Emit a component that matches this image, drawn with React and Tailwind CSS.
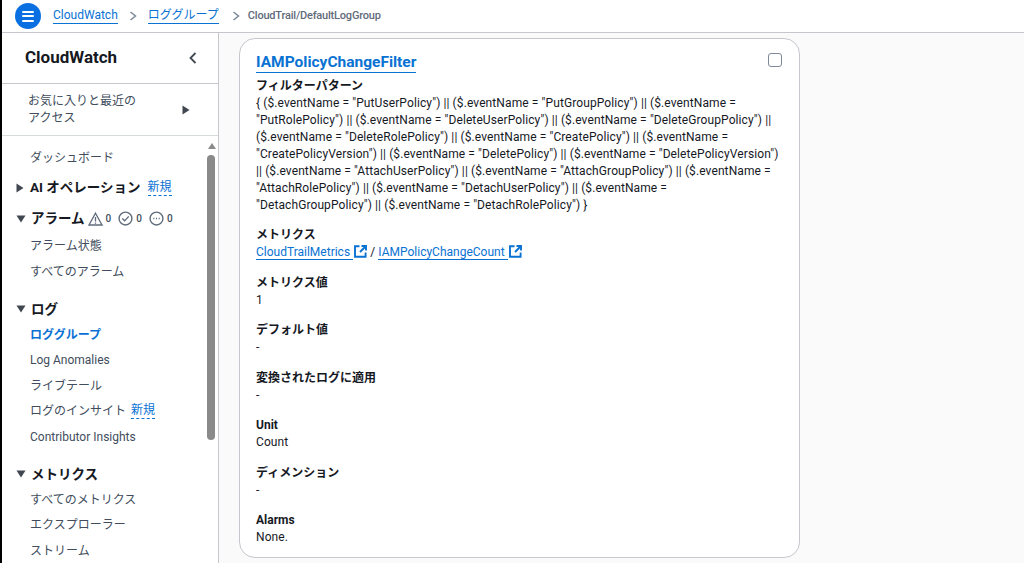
import React from "react";

function Caret({ open, className = "" }) {
  return open ? (
    <svg width="10" height="8" viewBox="0 0 10 8" className={`shrink-0 ${className}`}><path d="M0.5 0.5h9L5 7.5z" fill="#414750" /></svg>
  ) : (
    <svg width="8" height="10" viewBox="0 0 8 10" className={`shrink-0 ${className}`}><path d="M0.5 0.5v9L7.5 5z" fill="#414750" /></svg>
  );
}

function External() {
  return (
    <svg width="13" height="13" viewBox="0 0 13 13" fill="none" stroke="#0972d3" strokeWidth="1.9" className="inline-block ml-[1px] align-[-2px]">
      <path d="M5.5 1.2H1v10.6h10.6V7.5" />
      <path d="M7.5 1H12v4.5M12 1L6 7" />
    </svg>
  );
}

function NavItem({ children, active }) {
  return (
    <div className={`h-[25.6px] flex items-center pl-[28px] text-[12px] ${active ? "font-bold text-[#0972d3]" : "text-[#414d5c]"}`}>
      {children}
    </div>
  );
}

function NewTag({ ml }) {
  return <span className={`${ml} text-[12px] font-normal text-[#0972d3] border-b border-dashed border-[#0972d3] leading-[15px]`}>新規</span>;
}

function Section({ open, children, tall = true }) {
  return (
    <div className={`${tall ? "h-[26px]" : "h-[25px]"} flex items-center pl-[14px] gap-[5px] text-[13.5px] font-bold text-[#16191f]`}>
      <Caret open={open} className={open ? "" : "mr-[1px]"} />
      {children}
    </div>
  );
}

function Field({ label, children, className = "" }) {
  return (
    <div className={`text-[12px] leading-[17px] ${className}`}>
      <div className="font-bold text-[#16191f]">{label}</div>
      <div className="text-[#16191f] tracking-[0.1px]">{children}</div>
    </div>
  );
}

function Stat({ children }) {
  return <span className="flex items-center gap-[3px] text-[10px] font-medium text-[#414d5c] mr-[7px]">{children}<span>0</span></span>;
}

function Link({ children }) {
  return <a className="text-[#0972d3] border-b border-[#0972d3] tracking-normal">{children}</a>;
}

export default function App() {
  return (
    <div className="w-[1024px] h-[563px] overflow-hidden bg-[#fafafa] flex flex-col border-l-2 border-black font-['Roboto','Noto_Sans_CJK_JP',sans-serif]">
      <header className="h-[33px] shrink-0 bg-white border-b border-[#c6c6cd] flex items-center pl-[13px] text-[12px]">
        <span className="w-[26px] h-[26px] rounded-full bg-[#0a6fe0] flex flex-col items-center justify-center gap-[2.5px]">
          <span className="w-[12px] h-[2px] bg-white rounded" />
          <span className="w-[12px] h-[2px] bg-white rounded" />
          <span className="w-[12px] h-[2px] bg-white rounded" />
        </span>
        <span className="ml-[12px] text-[#0972d3] border-b border-[#0972d3] leading-[15px]">CloudWatch</span>
        <svg width="8" height="10" viewBox="0 0 8 10" fill="none" stroke="#7d8998" strokeWidth="1.5" className="mx-[11px]"><path d="M1.5 1l5 4-5 4" /></svg>
        <span className="text-[#0972d3] border-b border-[#0972d3] leading-[15px]">ロググループ</span>
        <svg width="8" height="10" viewBox="0 0 8 10" fill="none" stroke="#7d8998" strokeWidth="1.5" className="ml-[13px] mr-[8px]"><path d="M1.5 1l5 4-5 4" /></svg>
        <span className="text-[11px] font-medium tracking-[-0.2px] text-[#5f6b7a]">CloudTrail/DefaultLogGroup</span>
      </header>
      <div className="flex flex-1 min-h-0">
        <aside className="w-[217px] shrink-0 bg-white border-r border-[#c6c6cd] relative overflow-hidden">
          <div className="h-[51px] flex items-center justify-between pl-[23px] pr-[21px] border-b border-[#c6c6cd]">
            <span className="text-[17px] font-bold text-[#16191f]">CloudWatch</span>
            <svg width="8" height="12" viewBox="0 0 8 12" fill="none" stroke="#414750" strokeWidth="1.8"><path d="M6.5 1L1.5 6l5 5" /></svg>
          </div>
          <div className="h-[52px] flex items-center justify-between pl-[26px] pr-[28px] border-b border-[#d5dbdb] text-[12px] leading-[17px] text-[#414d5c]">
            <span>お気に入りと最近の<br />アクセス</span>
            <Caret />
          </div>
          <div className="pt-[9px]">
            <NavItem>ダッシュボード</NavItem>
            <div className="h-[4px]" />
            <Section>AI オペレーション<NewTag ml="ml-[2px]" /></Section>
            <div className="h-[5px]" />
            <Section open>
              <span className="flex items-center gap-[3px]">アラーム
                <span className="flex items-center">
                  <Stat><svg width="15" height="14" viewBox="0 0 15 14" fill="none" stroke="#5f6b7a" strokeWidth="1.3"><path d="M7.5 1.2L14 13H1z" /><path d="M7.5 5v4.5M7.5 10.5v1.3" /></svg></Stat>
                  <Stat><svg width="15" height="15" viewBox="0 0 14 14" fill="none" stroke="#5f6b7a" strokeWidth="1.3"><circle cx="7" cy="7" r="6" /><path d="M4 7l2.2 2.2L10 5" /></svg></Stat>
                  <Stat><svg width="15" height="15" viewBox="0 0 14 14" fill="none" stroke="#5f6b7a" strokeWidth="1.3"><circle cx="7" cy="7" r="6" /><path d="M4 7h1M6.5 7h1M9 7h1" /></svg></Stat>
                </span>
              </span>
            </Section>
            <div className="h-[2px]" />
            <NavItem>アラーム状態</NavItem>
            <NavItem>すべてのアラーム</NavItem>
            <div className="h-[11px]" />
            <Section open>ログ</Section>
            <NavItem active>ロググループ</NavItem>
            <NavItem>Log Anomalies</NavItem>
            <NavItem>ライブテール</NavItem>
            <NavItem>ログのインサイト<NewTag ml="ml-[5px]" /></NavItem>
            <NavItem>Contributor Insights</NavItem>
            <div className="h-[12px]" />
            <Section open tall={false}>メトリクス</Section>
            <NavItem>すべてのメトリクス</NavItem>
            <NavItem>エクスプローラー</NavItem>
            <NavItem>ストリーム</NavItem>
          </div>
          <svg width="8" height="6" viewBox="0 0 8 6" className="absolute left-[206px] top-[110px]"><path d="M4 0l4 6H0z" fill="#8a8a8a" /></svg>
          <div className="absolute left-[205px] top-[122px] w-[8px] h-[285px] rounded-full bg-[#8a8a8a]" />
        </aside>
        <main className="flex-1 min-w-0 pt-[5px] pl-[20px]">
          <section className="w-[561px] h-[520px] bg-white rounded-[16px] border border-[#c6c6cd] pl-[16px] pr-[14px] pt-[11px] relative">
            <h2 className="text-[15.5px] leading-[19px] font-bold text-[#0972d3] inline-block border-b border-[#0972d3]">IAMPolicyChangeFilter</h2>
            <span className="absolute top-[14px] right-[17px] w-[14px] h-[14px] rounded-[3px] border border-[#7d8998] bg-white" />
            <Field label="フィルターパターン" className="mt-[4px]">
              <div className="w-[526px]">
                {'{ ($.eventName = "PutUserPolicy") || ($.eventName = "PutGroupPolicy") || ($.eventName = "PutRolePolicy") || ($.eventName = "DeleteUserPolicy") || ($.eventName = "DeleteGroupPolicy") || ($.eventName = "DeleteRolePolicy") || ($.eventName = "CreatePolicy") || ($.eventName = "CreatePolicyVersion") || ($.eventName = "DeletePolicy") || ($.eventName = "DeletePolicyVersion") || ($.eventName = "AttachUserPolicy") || ($.eventName = "AttachGroupPolicy") || ($.eventName = "AttachRolePolicy") || ($.eventName = "DetachUserPolicy") || ($.eventName = "DetachGroupPolicy") || ($.eventName = "DetachRolePolicy") }'}
              </div>
            </Field>
            <Field label="メトリクス" className="mt-[13px]">
              <Link>CloudTrailMetrics </Link><External /> / <Link>IAMPolicyChangeCount </Link><External />
            </Field>
            <Field label="メトリクス値" className="mt-[14px]">1</Field>
            <Field label="デフォルト値" className="mt-[13px]">-</Field>
            <Field label="変換されたログに適用" className="mt-[14px]">-</Field>
            <Field label="Unit" className="mt-[13px]">Count</Field>
            <Field label="ディメンション" className="mt-[14px]">-</Field>
            <Field label="Alarms" className="mt-[13px]">None.</Field>
          </section>
        </main>
      </div>
    </div>
  );
}
